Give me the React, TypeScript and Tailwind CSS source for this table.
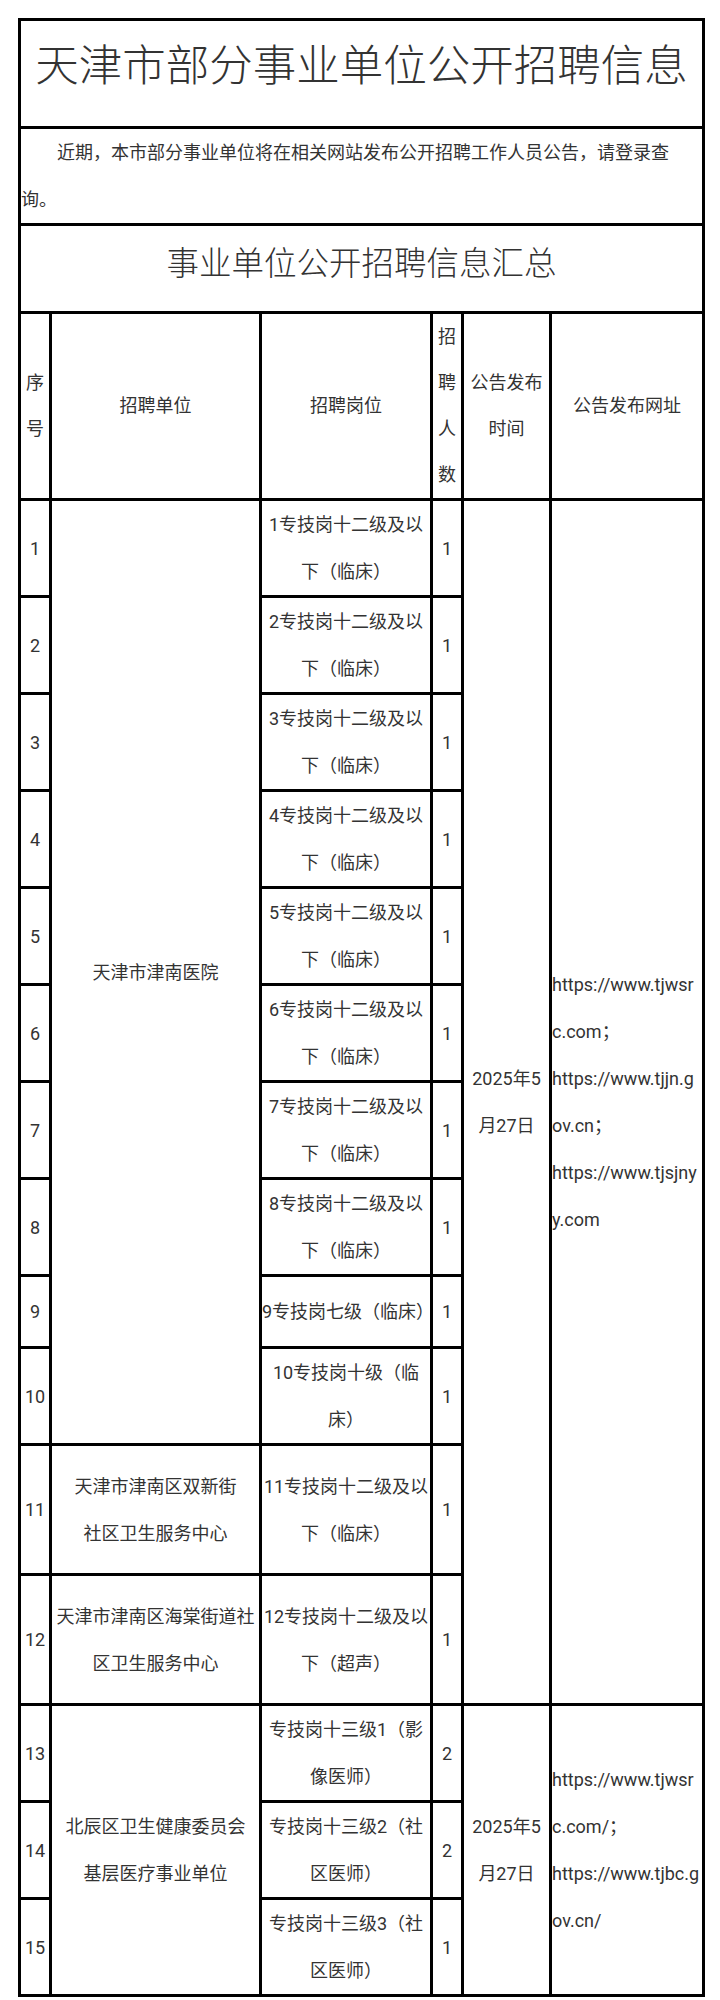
import React from "react";

const cell = "border-[3px] border-black p-0 text-center align-middle";

function Post({ children, nowrap }: { children: React.ReactNode; nowrap?: boolean }) {
  return <td className={`${cell} ${nowrap ? "whitespace-nowrap" : ""}`}>{children}</td>;
}

export default function App() {
  const posts12 = Array.from({ length: 8 }, (_, i) => `${i + 1}专技岗十二级及以下（临床）`);
  return (
    <div
      className="bg-white text-[#333] pt-[18px] pl-[18px] pb-[5px]"
      style={{ fontFamily: 'Roboto, "Noto Sans CJK SC", sans-serif' }}
    >
      <table className="border-collapse table-fixed w-[684px] text-[18px] leading-[47px]">
        <colgroup>
          <col className="w-[31px]" />
          <col className="w-[210px]" />
          <col className="w-[171px]" />
          <col className="w-[31px]" />
          <col className="w-[88px]" />
          <col className="w-[153px]" />
        </colgroup>
        <tbody>
          <tr className="h-[108px]">
            <td colSpan={6} className={`${cell} whitespace-nowrap text-[43.5px] font-light leading-[60px] pb-[13px]`}>
              天津市部分事业单位公开招聘信息
            </td>
          </tr>
          <tr>
            <td colSpan={6} className="border-[3px] border-black p-0 text-left indent-[36px] leading-[47px]">
              近期，本市部分事业单位将在相关网站发布公开招聘工作人员公告，请登录查询。
            </td>
          </tr>
          <tr className="h-[88px]">
            <td colSpan={6} className={`${cell} text-[32.5px] font-light leading-[1.3] pb-[9px]`}>
              事业单位公开招聘信息汇总
            </td>
          </tr>
          <tr className="leading-[46px]">
            <td className={cell}>序号</td>
            <td className={cell}>招聘单位</td>
            <td className={cell}>招聘岗位</td>
            <td className={cell}>招聘人数</td>
            <td className={cell}>公告发布时间</td>
            <td className={cell}>公告发布网址</td>
          </tr>
          {posts12.map((p, i) => (
            <tr key={p}>
              <td className={cell}>{i + 1}</td>
              {i === 0 && (
                <td rowSpan={10} className={cell}>
                  天津市津南医院
                </td>
              )}
              <Post>{p}</Post>
              <td className={cell}>1</td>
              {i === 0 && (
                <>
                  <td rowSpan={12} className={cell}>
                    2025年5月27日
                  </td>
                  <td rowSpan={12} className={`${cell} text-left break-all`}>
                    <div>https://www.tjwsrc.com；</div>
                    <div>https://www.tjjn.gov.cn；</div>
                    <div>https://www.tjsjnyy.com</div>
                  </td>
                </>
              )}
            </tr>
          ))}
          <tr className="h-[72px]">
            <td className={cell}>9</td>
            <Post nowrap>9专技岗七级（临床）</Post>
            <td className={cell}>1</td>
          </tr>
          <tr>
            <td className={cell}>10</td>
            <Post>10专技岗十级（临床）</Post>
            <td className={cell}>1</td>
          </tr>
          <tr className="h-[130px]">
            <td className={cell}>11</td>
            <td className={cell}>
              天津市津南区双新街
              <br />
              社区卫生服务中心
            </td>
            <Post>11专技岗十二级及以下（临床）</Post>
            <td className={cell}>1</td>
          </tr>
          <tr className="h-[130px]">
            <td className={cell}>12</td>
            <td className={cell}>天津市津南区海棠街道社区卫生服务中心</td>
            <Post>12专技岗十二级及以下（超声）</Post>
            <td className={cell}>1</td>
          </tr>
          <tr>
            <td className={cell}>13</td>
            <td rowSpan={3} className={cell}>
              北辰区卫生健康委员会
              <br />
              基层医疗事业单位
            </td>
            <Post>专技岗十三级1（影像医师）</Post>
            <td className={cell}>2</td>
            <td rowSpan={3} className={cell}>
              2025年5月27日
            </td>
            <td rowSpan={3} className={`${cell} text-left break-all`}>
              <div>https://www.tjwsrc.com/；</div>
              <div>https://www.tjbc.gov.cn/</div>
            </td>
          </tr>
          <tr>
            <td className={cell}>14</td>
            <Post>专技岗十三级2（社区医师）</Post>
            <td className={cell}>2</td>
          </tr>
          <tr>
            <td className={cell}>15</td>
            <Post>专技岗十三级3（社区医师）</Post>
            <td className={cell}>1</td>
          </tr>
        </tbody>
      </table>
    </div>
  );
}
